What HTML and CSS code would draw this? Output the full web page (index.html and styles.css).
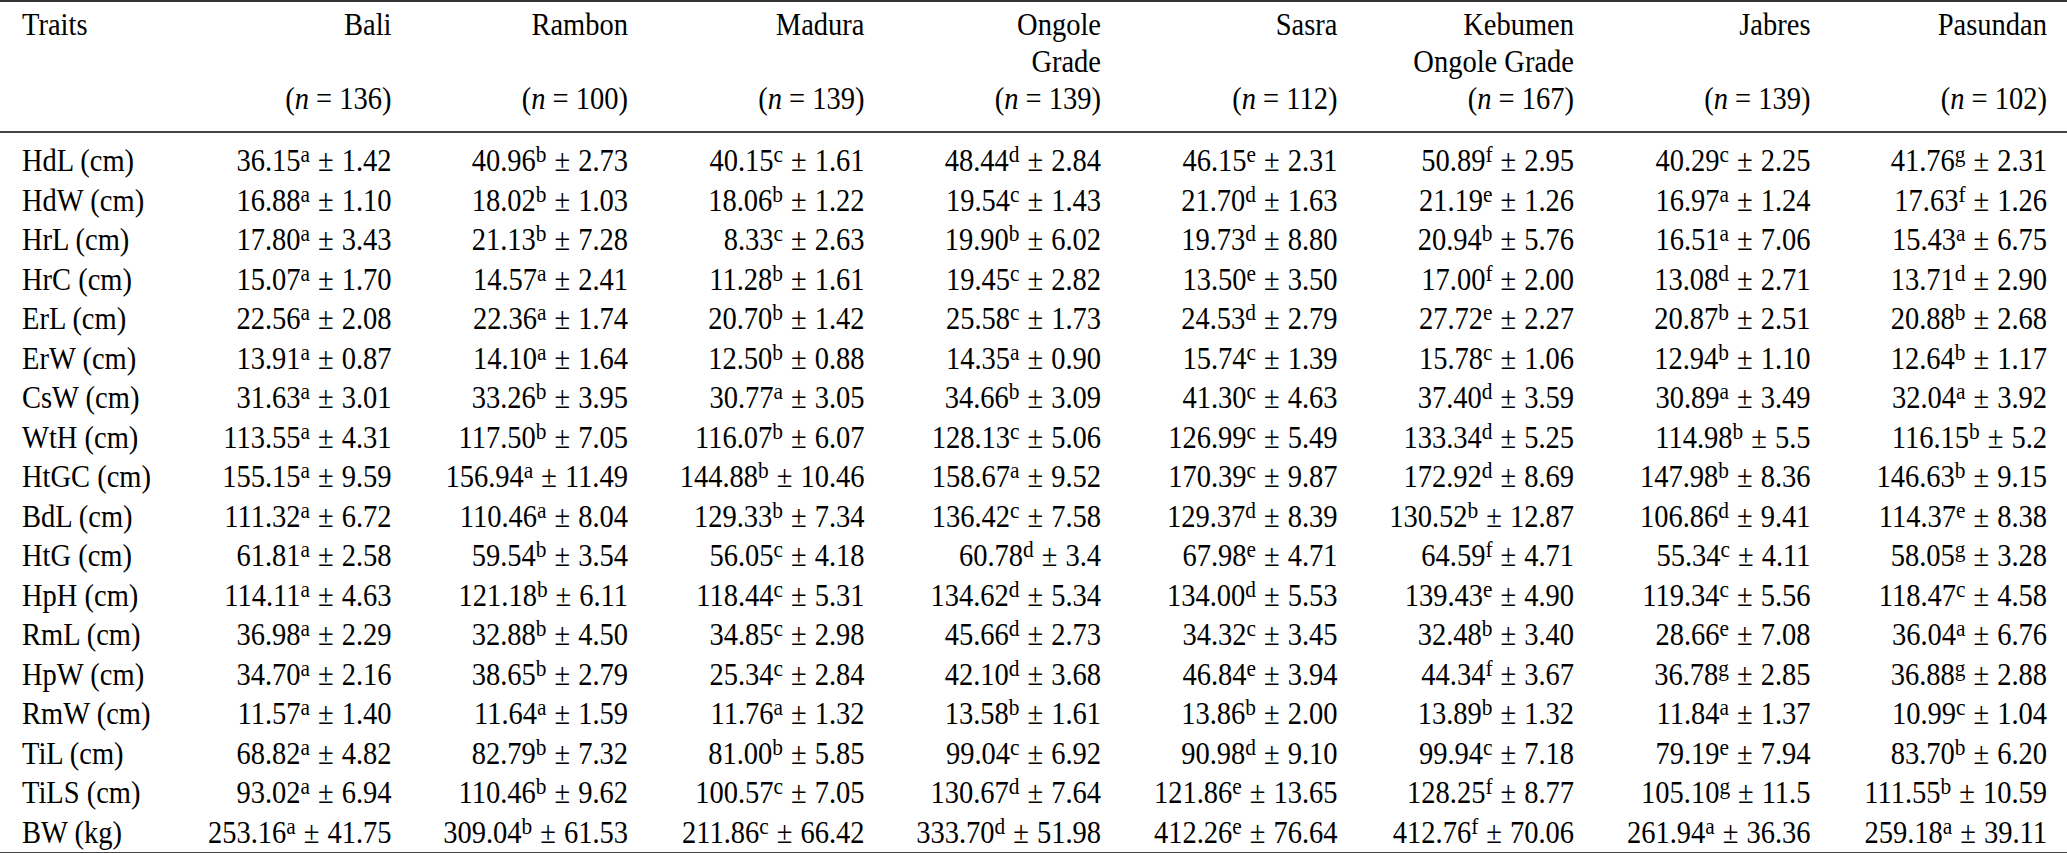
FILE: index.html
```html
<!DOCTYPE html>
<html>
<head>
<meta charset="utf-8">
<link rel="stylesheet" href="styles.css">
</head>
<body>
<table class="traits">
<colgroup>
<col class="c-trait"><col class="c-val"><col class="c-val"><col class="c-val"><col class="c-val"><col class="c-val"><col class="c-val"><col class="c-val"><col class="c-val"><col class="c-fill">
</colgroup>
<thead>
<tr>
<th class="lbl"><div class="h"><span class="v">Traits</span></div></th>
<th><div class="h"><span class="v">Bali</span></div><div class="h"></div><div class="h"><span class="v">(<i>n</i> = 136)</span></div></th>
<th><div class="h"><span class="v">Rambon</span></div><div class="h"></div><div class="h"><span class="v">(<i>n</i> = 100)</span></div></th>
<th><div class="h"><span class="v">Madura</span></div><div class="h"></div><div class="h"><span class="v">(<i>n</i> = 139)</span></div></th>
<th><div class="h"><span class="v">Ongole</span></div><div class="h"><span class="v">Grade</span></div><div class="h"><span class="v">(<i>n</i> = 139)</span></div></th>
<th><div class="h"><span class="v">Sasra</span></div><div class="h"></div><div class="h"><span class="v">(<i>n</i> = 112)</span></div></th>
<th><div class="h"><span class="v">Kebumen</span></div><div class="h"><span class="v">Ongole Grade</span></div><div class="h"><span class="v">(<i>n</i> = 167)</span></div></th>
<th><div class="h"><span class="v">Jabres</span></div><div class="h"></div><div class="h"><span class="v">(<i>n</i> = 139)</span></div></th>
<th><div class="h"><span class="v">Pasundan</span></div><div class="h"></div><div class="h"><span class="v">(<i>n</i> = 102)</span></div></th>
<th class="fill"></th>
</tr>
</thead>
<tbody id="rows"></tbody>
</table>
<script src="app.js"></script>
</body>
</html>
```
FILE: app.js
```js
const data = [
["HdL (cm)","36.15 a 1.42","40.96 b 2.73","40.15 c 1.61","48.44 d 2.84","46.15 e 2.31","50.89 f 2.95","40.29 c 2.25","41.76 g 2.31"],
["HdW (cm)","16.88 a 1.10","18.02 b 1.03","18.06 b 1.22","19.54 c 1.43","21.70 d 1.63","21.19 e 1.26","16.97 a 1.24","17.63 f 1.26"],
["HrL (cm)","17.80 a 3.43","21.13 b 7.28","8.33 c 2.63","19.90 b 6.02","19.73 d 8.80","20.94 b 5.76","16.51 a 7.06","15.43 a 6.75"],
["HrC (cm)","15.07 a 1.70","14.57 a 2.41","11.28 b 1.61","19.45 c 2.82","13.50 e 3.50","17.00 f 2.00","13.08 d 2.71","13.71 d 2.90"],
["ErL (cm)","22.56 a 2.08","22.36 a 1.74","20.70 b 1.42","25.58 c 1.73","24.53 d 2.79","27.72 e 2.27","20.87 b 2.51","20.88 b 2.68"],
["ErW (cm)","13.91 a 0.87","14.10 a 1.64","12.50 b 0.88","14.35 a 0.90","15.74 c 1.39","15.78 c 1.06","12.94 b 1.10","12.64 b 1.17"],
["CsW (cm)","31.63 a 3.01","33.26 b 3.95","30.77 a 3.05","34.66 b 3.09","41.30 c 4.63","37.40 d 3.59","30.89 a 3.49","32.04 a 3.92"],
["WtH (cm)","113.55 a 4.31","117.50 b 7.05","116.07 b 6.07","128.13 c 5.06","126.99 c 5.49","133.34 d 5.25","114.98 b 5.5","116.15 b 5.2"],
["HtGC (cm)","155.15 a 9.59","156.94 a 11.49","144.88 b 10.46","158.67 a 9.52","170.39 c 9.87","172.92 d 8.69","147.98 b 8.36","146.63 b 9.15"],
["BdL (cm)","111.32 a 6.72","110.46 a 8.04","129.33 b 7.34","136.42 c 7.58","129.37 d 8.39","130.52 b 12.87","106.86 d 9.41","114.37 e 8.38"],
["HtG (cm)","61.81 a 2.58","59.54 b 3.54","56.05 c 4.18","60.78 d 3.4","67.98 e 4.71","64.59 f 4.71","55.34 c 4.11","58.05 g 3.28"],
["HpH (cm)","114.11 a 4.63","121.18 b 6.11","118.44 c 5.31","134.62 d 5.34","134.00 d 5.53","139.43 e 4.90","119.34 c 5.56","118.47 c 4.58"],
["RmL (cm)","36.98 a 2.29","32.88 b 4.50","34.85 c 2.98","45.66 d 2.73","34.32 c 3.45","32.48 b 3.40","28.66 e 7.08","36.04 a 6.76"],
["HpW (cm)","34.70 a 2.16","38.65 b 2.79","25.34 c 2.84","42.10 d 3.68","46.84 e 3.94","44.34 f 3.67","36.78 g 2.85","36.88 g 2.88"],
["RmW (cm)","11.57 a 1.40","11.64 a 1.59","11.76 a 1.32","13.58 b 1.61","13.86 b 2.00","13.89 b 1.32","11.84 a 1.37","10.99 c 1.04"],
["TiL (cm)","68.82 a 4.82","82.79 b 7.32","81.00 b 5.85","99.04 c 6.92","90.98 d 9.10","99.94 c 7.18","79.19 e 7.94","83.70 b 6.20"],
["TiLS (cm)","93.02 a 6.94","110.46 b 9.62","100.57 c 7.05","130.67 d 7.64","121.86 e 13.65","128.25 f 8.77","105.10 g 11.5","111.55 b 10.59"],
["BW (kg)","253.16 a 41.75","309.04 b 61.53","211.86 c 66.42","333.70 d 51.98","412.26 e 76.64","412.76 f 70.06","261.94 a 36.36","259.18 a 39.11"]
];
const tb = document.getElementById('rows');
data.forEach((r) => {
  const tr = document.createElement('tr');
  const lbl = document.createElement('td');
  lbl.className = 'lbl';
  lbl.innerHTML = '<span class="v">' + r[0] + '</span>';
  tr.appendChild(lbl);
  for (let k = 1; k < r.length; k++) {
    const [m, s, sd] = r[k].split(' ');
    const td = document.createElement('td');
    td.innerHTML = '<span class="v">' + m + '<sup>' + s + '</sup><span class="pm">±</span>' + sd + '</span>';
    tr.appendChild(td);
  }
  const fill = document.createElement('td');
  fill.className = 'fill';
  tr.appendChild(fill);
  tb.appendChild(tr);
});
```
FILE: styles.css
```css
html, body {
  margin: 0;
  padding: 0;
  background: #fff;
}
body {
  font-family: "Liberation Serif", "Times New Roman", serif;
  font-size: 28.5px;
  color: #000;
}
.traits {
  width: 2067px;
  border-collapse: collapse;
  table-layout: fixed;
  border-top: 2px solid #333;
  border-bottom: 2px solid #444;
}
.c-trait { width: 155px; }
.c-val { width: 236.5px; }
.c-fill { width: 20px; }
.traits th, .traits td {
  padding: 0;
  text-align: right;
  white-space: nowrap;
  font-weight: normal;
}
.traits .lbl {
  text-align: left;
  padding-left: 22px;
}
.traits thead th {
  vertical-align: top;
  padding-top: 4px;
  padding-bottom: 14px;
  border-bottom: 2px solid #444;
}
.h {
  height: 37px;
  line-height: 37px;
}
.v {
  display: inline-block;
  transform: scaleY(1.12);
}
.traits tbody td {
  height: 39.5px;
  line-height: 39.5px;
}
.traits tbody tr:first-child td {
  padding-top: 8px;
}
sup {
  font-size: 0.75em;
  line-height: 0;
  vertical-align: 0.4em;
}
.pm {
  margin: 0 0.28em;
}
```
